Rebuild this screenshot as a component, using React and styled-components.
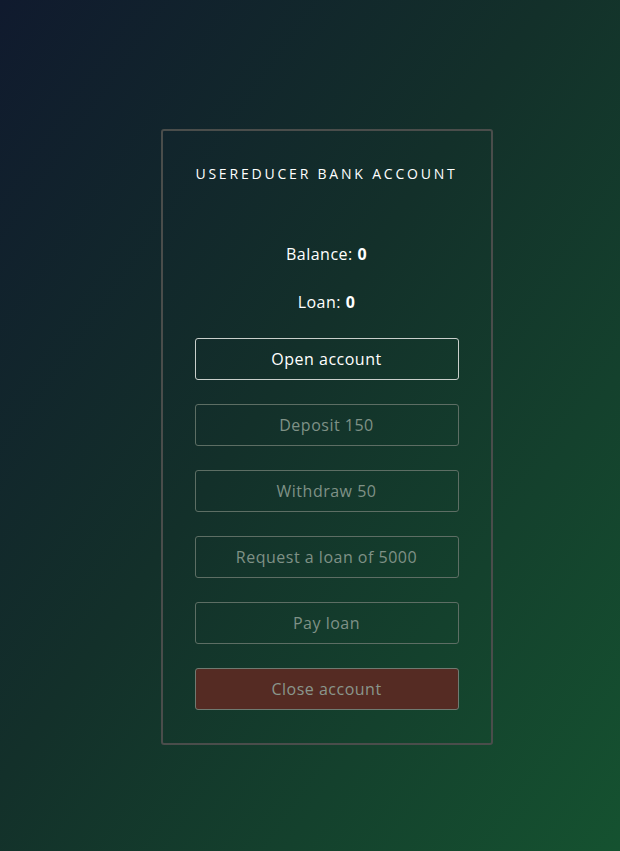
import React from "react";
import styled, { createGlobalStyle } from "styled-components";

const GlobalStyle = createGlobalStyle`
  * { box-sizing: border-box; }
  html, body { margin: 0; height: 100%; }
  body {
    font-family: "Open Sans", "Noto Sans", sans-serif;
    background: linear-gradient(125deg, #101a2e 0%, #13302a 45%, #155230 100%);
    background-attachment: fixed;
    color: #fff;
    min-height: 851px;
  }
`;

const Page = styled.div`
  display: flex;
  justify-content: center;
  padding: 129px 0 0 33px;
`;

const Card = styled.div`
  width: 332px;
  border: 2px solid #4a4d4b;
  border-radius: 3px;
  padding: 33px 32px 33px;
  display: flex;
  flex-direction: column;
  align-items: center;
`;

const Title = styled.h1`
  margin: 0 0 58px;
  font-size: 14px;
  line-height: 20px;
  font-weight: 500;
  letter-spacing: 2.8px;
  text-transform: uppercase;
  text-align: center;
  white-space: nowrap;
`;

const Stats = styled.div`
  display: flex;
  flex-direction: column;
  gap: 24px;
  align-items: center;
  width: 100%;
`;

const Stat = styled.p`
  margin: 0;
  font-size: 16px;
  line-height: 24px;
  font-weight: 500;
  letter-spacing: 0.5px;
  strong { font-weight: 700; }
`;

const Button = styled.button`
  width: 264px;
  height: 42px;
  border-radius: 3px;
  font-family: inherit;
  font-size: 16px;
  font-weight: 500;
  letter-spacing: 0.5px;
  border: 1px solid ${(p) => (p.disabled ? "#5d6e64" : "#c9cfcb")};
  color: ${(p) => (p.disabled ? "#7f9186" : "#fff")};
  background: ${(p) => (p.danger ? "#552b23" : "transparent")};
  ${(p) => p.danger && "border-color: #6f7a71; color: #8a968c;"}
`;

export default function App() {
  return (
    <>
      <GlobalStyle />
      <Page>
        <Card>
          <Title>useReducer Bank Account</Title>
          <Stats>
            <Stat>
              Balance: <strong>0</strong>
            </Stat>
            <Stat>
              Loan: <strong>0</strong>
            </Stat>
            <Button>Open account</Button>
            <Button disabled>Deposit 150</Button>
            <Button disabled>Withdraw 50</Button>
            <Button disabled>Request a loan of 5000</Button>
            <Button disabled>Pay loan</Button>
            <Button disabled danger>
              Close account
            </Button>
          </Stats>
        </Card>
      </Page>
    </>
  );
}
